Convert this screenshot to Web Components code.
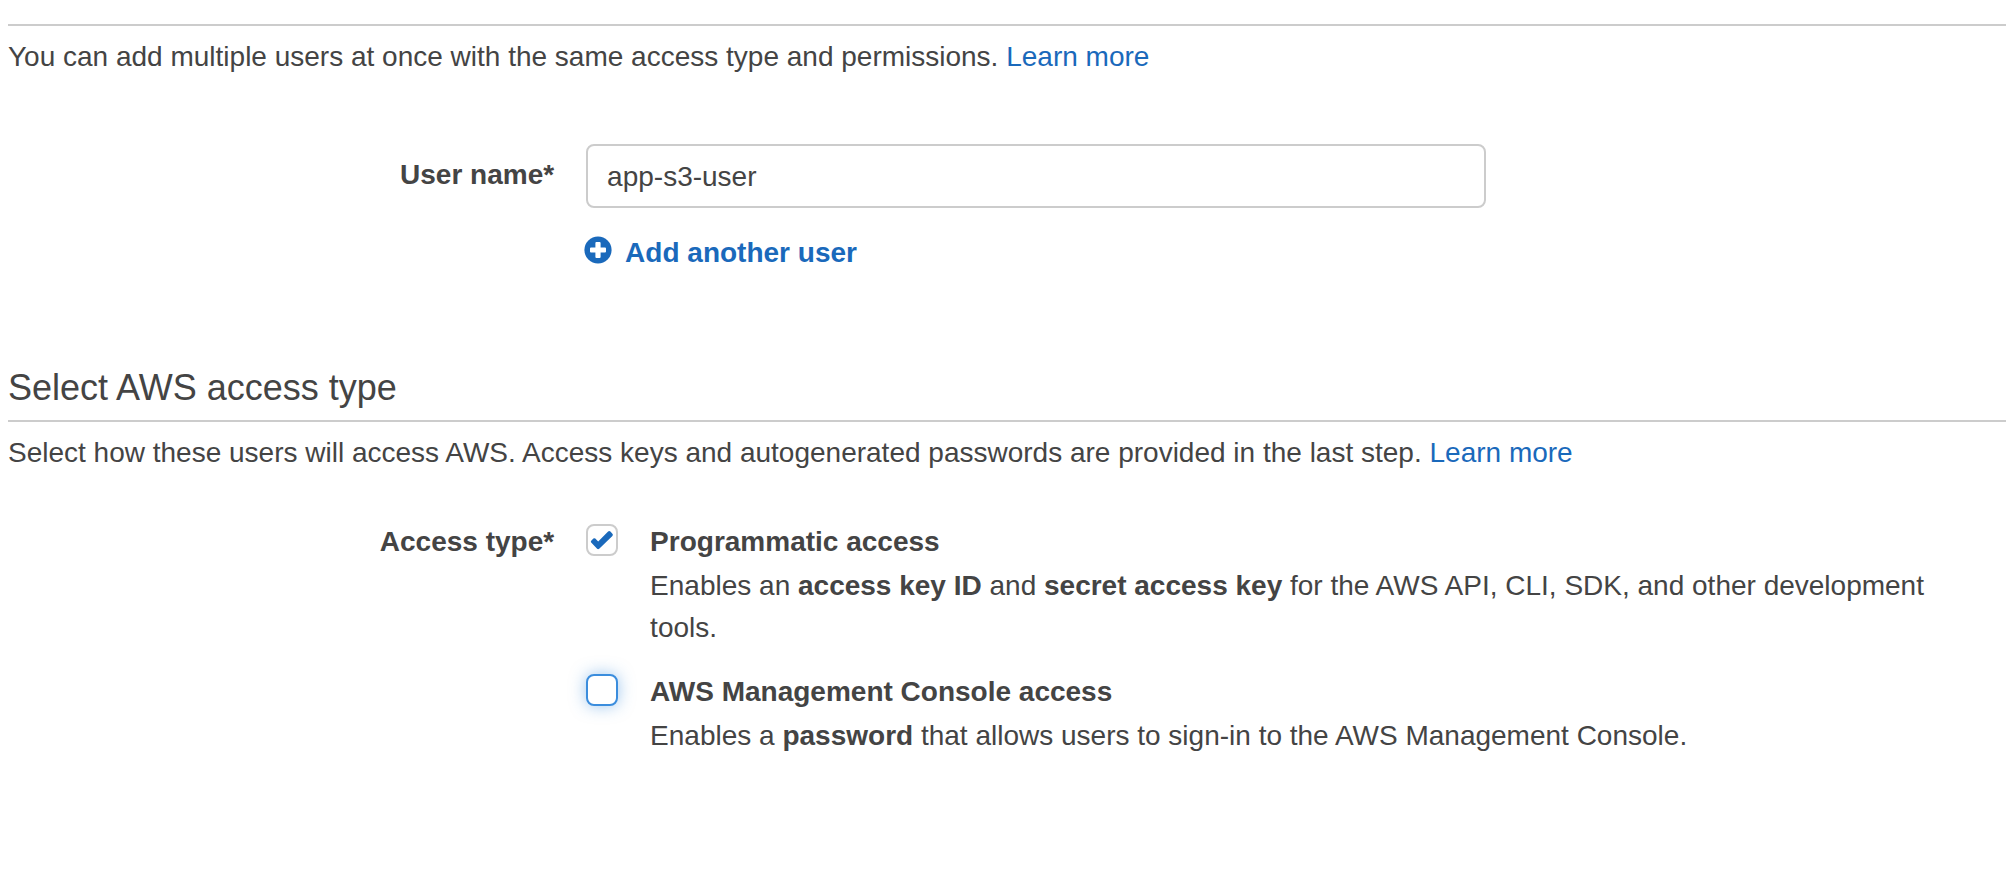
<!DOCTYPE html>
<html lang="en">
<head>
<meta charset="utf-8">
<title>Add user</title>
<style>
  body {
    margin: 0;
    background: #fff;
    color: #444;
    font: 28px/42px "Liberation Sans", Arial, sans-serif;
  }
</style>
</head>
<body>
<add-user-page></add-user-page>

<script>
const define = (name, html) => {
  const template = document.createElement('template');
  template.innerHTML = html;
  customElements.define(name, class extends HTMLElement {
    constructor() {
      super();
      this.attachShadow({ mode: 'open' }).append(template.content.cloneNode(true));
      this.shadowRoot.querySelectorAll('[data-text]').forEach(el => {
        el.textContent = this.getAttribute(el.dataset.text) || '';
      });
      const input = this.shadowRoot.querySelector('input');
      if (input) {
        if (this.hasAttribute('value')) input.value = this.getAttribute('value');
        input.checked = this.hasAttribute('checked');
        input.classList.toggle('active', this.hasAttribute('active'));
      }
    }
  });
};

define('text-link', `
  <style>
    :host { display: inline; }
    a { color: #1a69bb; text-decoration: none; }
    a:hover { text-decoration: underline; }
  </style>
  <a href="#"><slot></slot></a>`);

define('page-section', `
  <style>
    :host { display: block; padding-left: 8px; }
    ::slotted(h2) {
      margin: 0; padding-bottom: 11px;
      font-size: 36px; line-height: 42px; font-weight: 400;
    }
    .intro { margin: 0; padding-top: 10px; border-top: 2px solid #ccc; }
    .content { padding-top: 47px; }
  </style>
  <slot name="heading"></slot>
  <p class="intro"><slot name="intro"></slot></p>
  <div class="content"><slot></slot></div>`);

define('text-field', `
  <style>
    :host { display: grid; grid-template-columns: 5fr 13fr; column-gap: 32px; }
    label { padding-top: 10px; text-align: right; font-weight: 700; }
    input {
      display: block; box-sizing: border-box;
      width: 100%; max-width: 900px; height: 64px;
      margin: 0; padding: 2px 19px 0;
      border: 2px solid #ccc; border-radius: 8px; outline: 0;
      background: #fff; color: inherit; font: inherit;
    }
    .action { padding-top: 24px; }
  </style>
  <label for="field" data-text="label"></label>
  <div>
    <input id="field" type="text">
    <div class="action"><slot></slot></div>
  </div>`);

define('add-button', `
  <style>
    :host { display: block; }
    button {
      display: flex; align-items: flex-start; gap: 13px;
      margin: 0; padding: 0; border: 0; background: none;
      color: #1a69bb; font: inherit; font-weight: 700; cursor: pointer;
    }
    svg { flex: none; width: 28px; height: 28px; margin: 4px 0 0 -2px; }
  </style>
  <button type="button">
    <svg viewBox="0 0 28 28" aria-hidden="true">
      <circle cx="14" cy="14" r="13.6" fill="currentColor"/>
      <path d="M12.4 6h3.2q1 0 1 1v4.4H21q1 0 1 1v3.2q0 1-1 1h-4.4V21q0 1-1 1h-3.2q-1 0-1-1v-4.4H7q-1 0-1-1v-3.2q0-1 1-1h4.4V7q0-1 1-1z" fill="#fff"/>
    </svg>
    <slot></slot>
  </button>`);

define('choice-group', `
  <style>
    :host { display: block; }
    .group { display: grid; grid-template-columns: 5fr 13fr; column-gap: 32px; }
    .name { text-align: right; font-weight: 700; }
    .options { display: grid; row-gap: 22px; padding-right: 32px; }
  </style>
  <div class="group" role="group" aria-labelledby="name">
    <div class="name" id="name" data-text="label"></div>
    <div class="options"><slot></slot></div>
  </div>`);

define('check-option', `
  <style>
    :host { display: grid; grid-template-columns: 32px 1fr; column-gap: 32px; }
    .box { display: grid; height: 32px; margin-top: 3px; }
    input, svg { grid-area: 1 / 1; width: 32px; height: 32px; }
    input {
      appearance: none; box-sizing: border-box; margin: 0;
      border: 2px solid #ccc; border-radius: 8px; outline: 0; background: #fff;
    }
    input.active { border-color: #3b8ddd; box-shadow: 0 0 16px rgba(59, 141, 221, .5); }
    svg { pointer-events: none; visibility: hidden; }
    input:checked + svg { visibility: visible; }
    label { display: block; font-weight: 700; }
    .detail { padding-top: 2px; }
  </style>
  <div class="box">
    <input id="choice" type="checkbox" aria-describedby="detail">
    <svg viewBox="0 0 32 32" aria-hidden="true">
      <path d="M5.2 18.6q-.8-1 0-1.9l2.2-2.1q1-.8 1.9 0l2.9 2.8 9.9-9.8q1.2-1 2.3 0l2 2.1q1 1.1 0 2.2L13.2 24.8q-1.1.9-2.1 0z" fill="#1a69bb"/>
    </svg>
  </div>
  <div>
    <label for="choice" data-text="label"></label>
    <div class="detail" id="detail"><slot></slot></div>
  </div>`);

define('add-user-page', `
  <style>
    :host { display: block; padding-top: 24px; }
    main { display: grid; row-gap: 93px; }
    .fields { padding-top: 19px; }
  </style>
  <main>
    <page-section>
      <span slot="intro">You can add multiple users at once with the same access type and permissions. <text-link>Learn more</text-link></span>
      <div class="fields">
        <text-field label="User name*" value="app-s3-user"><add-button>Add another user</add-button></text-field>
      </div>
    </page-section>
    <page-section>
      <h2 slot="heading">Select AWS access type</h2>
      <span slot="intro">Select how these users will access AWS. Access keys and autogenerated passwords are provided in the last step. <text-link>Learn more</text-link></span>
      <choice-group label="Access type*">
        <check-option label="Programmatic access" checked>Enables an <b>access key ID</b> and <b>secret access key</b> for the AWS API, CLI, SDK, and other development tools.</check-option>
        <check-option label="AWS Management Console access" active>Enables a <b>password</b> that allows users to sign-in to the AWS Management Console.</check-option>
      </choice-group>
    </page-section>
  </main>`);
</script>
</body>
</html>
